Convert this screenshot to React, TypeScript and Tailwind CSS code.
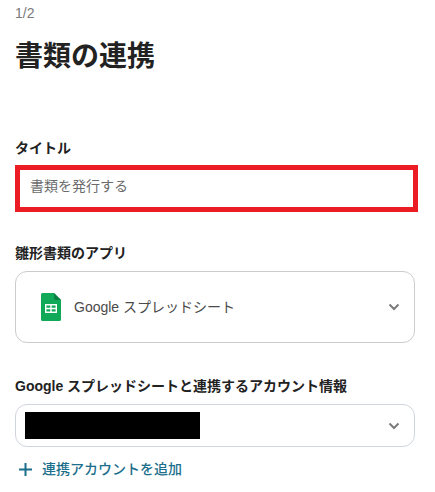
const font = { fontFamily: '"Liberation Sans", "Noto Sans CJK JP", sans-serif' };

function Chevron() {
  return (
    <svg width="12" height="8" viewBox="0 0 12 8" fill="none" className="shrink-0">
      <path d="M1.5 1.5 L6 6 L10.5 1.5" stroke="#7b7b7b" strokeWidth="2" />
    </svg>
  );
}

function SheetsIcon() {
  return (
    <svg width="20" height="28" viewBox="0 0 20 28" className="shrink-0">
      <path d="M1.5 0 H13 L20 7 V26.5 a1.5 1.5 0 0 1 -1.5 1.5 H1.5 a1.5 1.5 0 0 1 -1.5 -1.5 V1.5 a1.5 1.5 0 0 1 1.5 -1.5 Z" fill="#0fa958" />
      <path d="M13 0 L20 7 H15 a2 2 0 0 1 -2 -2 Z" fill="#0b8043" />
      <path d="M4 11 H16 V20 H4 Z M5.4 12.4 V14.8 H9.3 V12.4 Z M10.7 12.4 V14.8 H14.6 V12.4 Z M5.4 16.2 V18.6 H9.3 V16.2 Z M10.7 16.2 V18.6 H14.6 V16.2 Z" fill="#ffffff" fillRule="evenodd" />
    </svg>
  );
}

export default function App() {
  return (
    <div style={font} className="w-[435px] h-[492px] overflow-hidden bg-white px-[15px] pt-[5px]">
      <div className="text-[14px] leading-[17px] text-[#7a7a7a]">1/2</div>
      <h1 className="mt-[18px] text-[28px] leading-[34px] font-bold text-[#222222]">書類の連携</h1>

      <div className="mt-[64px] text-[14px] leading-[20px] font-bold text-[#222222]">タイトル</div>
      <div className="mt-[7px] w-[403px] h-[47px] border-[5px] border-[#ec1c24] flex items-center pl-[10px] pb-[4px] text-[14px] text-[#6b6b6b]">
        書類を発行する
      </div>

      <div className="mt-[31px] text-[14px] leading-[20px] font-bold text-[#222222]">雛形書類のアプリ</div>
      <div className="mt-[8px] w-[400px] h-[72px] rounded-[12px] border border-[#cccccc] flex items-center justify-between pl-[25px] pr-[14px]">
        <div className="flex items-center gap-[13px]">
          <SheetsIcon />
          <span className="text-[14px] text-[#4a4a4a]">Google スプレッドシート</span>
        </div>
        <Chevron />
      </div>

      <div className="mt-[33px] text-[14px] leading-[20px] font-bold text-[#222222]">Google スプレッドシートと連携するアカウント情報</div>
      <div className="mt-[8px] w-[400px] h-[43px] rounded-[12px] border border-[#d0d5dd] flex items-center justify-between pl-[9px] pr-[14px]">
        <div className="w-[175px] h-[27px] bg-black" />
        <Chevron />
      </div>

      <div className="mt-[12px] flex items-center gap-[10px] pl-[4px] text-[14px] font-medium text-[#1c6f8c]">
        <svg width="13" height="13" viewBox="0 0 13 13" className="shrink-0">
          <path d="M6.5 0 V13 M0 6.5 H13" stroke="#1c6f8c" strokeWidth="2" />
        </svg>
        <span>連携アカウントを追加</span>
      </div>
    </div>
  );
}
